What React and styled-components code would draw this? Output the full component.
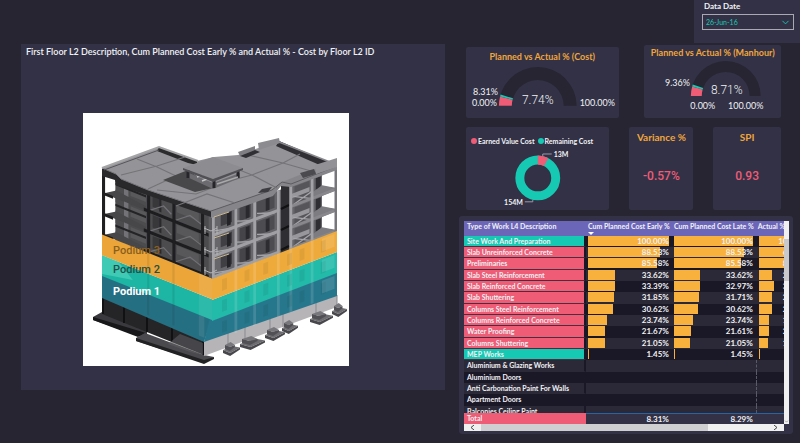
import { useState } from "react";
import styled, { createGlobalStyle } from "styled-components";
import { ChevronDown } from "lucide-react";

const colors = {
  page: "#272532",
  panel: "#323146",
  pink: "#ee5c76",
  teal: "#16c9b3",
  amber: "#f8b13c",
  title: "#f0a63c",
  purple: "#6c66b9",
  text: "#f1f1f4",
};

const rows = [
  { name: "Site Work And Preparation", tone: "teal", early: 100, late: 100, actual: 100 },
  { name: "Slab Unreinforced Concrete", tone: "pink", early: 88.53, late: 88.53, actual: 68.53 },
  { name: "Preliminaries", tone: "pink", early: 85.58, late: 85.58, actual: 85.58 },
  { name: "Slab Steel Reinforcement", tone: "pink", early: 33.62, late: 33.62, actual: 25.62 },
  { name: "Slab Reinforced Concrete", tone: "pink", early: 33.39, late: 32.97, actual: 30.39 },
  { name: "Slab Shuttering", tone: "pink", early: 31.85, late: 31.71, actual: 25.85 },
  { name: "Columns Steel Reinforcement", tone: "pink", early: 30.62, late: 30.62, actual: 26.62 },
  { name: "Columns Reinforced Concrete", tone: "pink", early: 23.74, late: 23.74, actual: 19.74 },
  { name: "Water Proofing", tone: "pink", early: 21.67, late: 21.61, actual: 20.67 },
  { name: "Columns Shuttering", tone: "pink", early: 21.05, late: 21.05, actual: 18.05 },
  { name: "MEP Works", tone: "teal", early: 1.45, late: 1.45, actual: 1.45 },
  { name: "Aluminium & Glazing Works" },
  { name: "Aluminium Doors" },
  { name: "Anti Carbonation Paint For Walls" },
  { name: "Apartment Doors" },
  { name: "Balconies Ceiling Paint" },
];

// point on a circle, share 0 = left end of the half ring, 1 = right end
const onHalf = (cx, cy, r, share) => {
  const a = Math.PI * (1 - share);
  return `${cx + r * Math.cos(a)} ${cy - r * Math.sin(a)}`;
};

const halfRing = (cx, cy, outer, inner, from, to) =>
  `M${onHalf(cx, cy, outer, from)} A${outer} ${outer} 0 0 1 ${onHalf(cx, cy, outer, to)} L${onHalf(cx, cy, inner, to)} A${inner} ${inner} 0 0 0 ${onHalf(cx, cy, inner, from)}Z`;

const CostGauge = () => (
  <Chart viewBox="0 0 153 54" role="img" aria-label="Planned vs Actual % (Cost)">
    <path d={halfRing(72, 42, 39, 26, 0, 1)} fill={colors.page} />
    <path d={halfRing(72, 42, 39, 26, 0, 0.077)} fill={colors.pink} />
    <path d={halfRing(72, 42, 39, 26, 0.077, 0.094)} fill={colors.teal} />
    <ChartText x="32" y="31" textAnchor="end">8.31%</ChartText>
    <ChartText x="31" y="42" textAnchor="end">0.00%</ChartText>
    <ChartText x="114" y="42">100.00%</ChartText>
    <Callout x="72" y="40" textAnchor="middle">7.74%</Callout>
  </Chart>
);

const ManhourGauge = () => (
  <Chart viewBox="0 0 137 58" role="img" aria-label="Planned vs Actual % (Manhour)">
    <path d={halfRing(82, 36, 35, 24, 0, 1)} fill={colors.page} />
    <path d={halfRing(82, 36, 35, 24, 0, 0.087)} fill={colors.pink} />
    <path d={halfRing(82, 36, 35, 24, 0.087, 0.106)} fill={colors.teal} />
    <ChartText x="46" y="26" textAnchor="end">9.36%</ChartText>
    <ChartText x="59" y="49" textAnchor="middle">0.00%</ChartText>
    <ChartText x="102" y="49" textAnchor="middle">100.00%</ChartText>
    <Callout x="83" y="34" textAnchor="middle">8.71%</Callout>
  </Chart>
);

const Donut = () => (
  <Chart viewBox="0 0 143 60" role="img" aria-label="Earned 13M, remaining 154M">
    <circle cx="72" cy="28" r="18" fill="none" stroke={colors.teal} strokeWidth="9" />
    <circle
      cx="72"
      cy="28"
      r="18"
      fill="none"
      stroke={colors.pink}
      strokeWidth="9"
      pathLength="167"
      strokeDasharray="13 154"
      transform="rotate(-90 72 28)"
    />
    <path d="M77 6 V4 H86 M67 50 V52 H59" fill="none" stroke="#9a99a8" strokeWidth="1" />
    <SmallText x="88" y="7">13M</SmallText>
    <SmallText x="57" y="55" textAnchor="end">154M</SmallText>
  </Chart>
);

// left facade runs 102..212, right facade 212..337, one storey is about 21 high
const leftAt = (t, floor) => [102 + 110 * t, 172 + 44 * t + 20.8 * floor];
const rightAt = (t, floor) => [212 + 125 * t, 216 - 48 * t + 21 * floor];

const band = (at, t1, t2, top, bottom) =>
  [at(t1, top), at(t2, top), at(t2, bottom), at(t1, bottom)].map((p) => p.join(",")).join(" ");

const leftColumns = [0, 0.41, 0.64, 0.9];
const rightColumns = [0, 0.18, 0.33, 0.52, 0.62, 0.79];
const footings = [
  [223, 350, 17],
  [240, 344, 25],
  [265, 335, 20],
  [282, 328, 16],
  [310, 319, 23],
  [332, 311, 15],
];

const Building = () => (
  <Model viewBox="83 113 266 253" role="img" aria-label="Building model by floor">
    <rect x="83" y="113" width="266" height="253" fill="#fff" />

    {/* back walls seen through the frames */}
    <polygon points={band(leftAt, 0.12, 1, 0, 3.1)} fill="#4c4c4f" />
    <polygon points={band(rightAt, 0, 0.88, 0, 3.1)} fill="#66666b" />
    {[0, 1, 2].map((f) => (
      <g key={f}>
        <polygon points={band(leftAt, 0.2, 0.24, f, f + 1)} fill="#737377" />
        <polygon points={band(leftAt, 0.26, 0.4, f + 0.1, f + 0.6)} fill="#59595c" />
        <polygon points={band(leftAt, 0.46, 0.52, f + 0.1, f + 0.7)} fill="#38383b" />
        <polygon points={band(leftAt, 0.52, 0.54, f + 0.1, f + 0.8)} fill="#29292c" />
        <polygon points={band(leftAt, 0.68, 0.88, f + 0.1, f + 0.5)} fill="#58585b" />
        <path
          d={`M${leftAt(0.44, f + 0.9)} L${leftAt(0.56, f + 0.45)} L${leftAt(0.63, f + 0.7)} M${leftAt(0.67, f + 0.9)} L${leftAt(0.8, f + 0.4)} L${leftAt(0.9, f + 0.6)}`}
          stroke="#717175"
          strokeWidth="1.2"
          fill="none"
        />
        {/* balcony wedge on the far left */}
        <polygon points={`${leftAt(0.02, f + 0.98)} ${leftAt(0.13, f + 0.62)} ${leftAt(0.4, f + 0.8)} ${leftAt(0.4, f + 1)} ${leftAt(0.02, f + 1)}`} fill="#47474a" />
        <polygon points={band(leftAt, 0.11, 0.4, f + 0.27, f + 0.38)} fill="#242427" />
        <polygon
          points={`${leftAt(0.03, f + 0.2)} ${leftAt(0.12, f + 0.2)} ${leftAt(0.12, f + 0.6)} ${leftAt(0.03, f + 0.92)}`}
          fill="#fff"
        />

        <polygon points={band(rightAt, 0.07, 0.16, f + 0.1, f + 0.65)} fill="#3f3f44" />
        <polygon points={band(rightAt, 0.12, 0.15, f + 0.15, f + 0.75)} fill="#242428" />
        <polygon points={band(rightAt, 0.22, 0.31, f + 0.1, f + 0.75)} fill="#454549" />
        <polygon points={band(rightAt, 0.27, 0.3, f + 0.15, f + 0.75)} fill="#2a2a2e" />
        <polygon points={band(rightAt, 0.36, 0.5, f + 0.1, f + 0.75)} fill="#4d4d51" />
        <polygon points={band(rightAt, 0.43, 0.46, f + 0.15, f + 0.75)} fill="#2d2d31" />
        <polygon points={band(rightAt, 0.66, 0.78, f + 0.1, f + 0.95)} fill="#55555a" />
        <polygon points={band(rightAt, 0.64, 0.78, f + 0.4, f + 0.62)} fill="#98989c" />
        <polygon points={band(rightAt, 0.83, 0.87, f + 0.1, f + 0.65)} fill="#2e2e33" />
        <path
          d={`M${rightAt(0.02, f + 0.75)} L${rightAt(0.17, f + 0.95)} M${rightAt(0.2, f + 0.7)} L${rightAt(0.32, f + 0.95)} M${rightAt(0.36, f + 0.7)} L${rightAt(0.5, f + 1)} M${rightAt(0.65, f + 0.55)} L${rightAt(0.8, f + 1)} M${rightAt(0.65, f + 0.95)} L${rightAt(0.8, f + 0.65)}`}
          stroke="#a6a6aa"
          strokeWidth="1.3"
          fill="none"
        />
        <polygon
          points={`${rightAt(0.81, f + 0.7)} ${rightAt(0.88, f + 0.55)} ${rightAt(1, f + 0.95)} ${rightAt(1, f + 1.05)} ${rightAt(0.81, f + 1.05)}`}
          fill="#7c7c81"
        />
        <polygon
          points={`${rightAt(0.93, f + 0.15)} ${rightAt(0.98, f + 0.15)} ${rightAt(0.98, f + 0.86)} ${rightAt(0.93, f + 0.7)}`}
          fill="#fff"
        />
      </g>
    ))}

    {/* slabs and columns */}
    {[1, 2, 3].map((f) => (
      <g key={f}>
        <polygon points={band(leftAt, 0, 0.1, f - 0.06, f + 0.08)} fill="#1d1d20" />
        <polygon points={band(leftAt, 0.38, 1, f - 0.1, f + 0.06)} fill="#1d1d20" />
        <polygon points={band(rightAt, 0, 0.54, f - 0.14, f + 0.02)} fill="#a0a0a4" />
        <polygon points={band(rightAt, 0.62, 1, f - 0.08, f + 0.06)} fill="#88888c" />
      </g>
    ))}
    {leftColumns.map((t) => (
      <polygon key={t} points={band(leftAt, t, t + 0.028, 0, 3)} fill="#1f1f22" />
    ))}
    <polygon points={band(leftAt, 0.97, 1, 0, 3)} fill="#5d5d61" />
    <polygon points="281,184 289,182 289,253 281,257" fill="#2f2f33" />
    <path
      d="M281 209 l8 -4 M281 230 l8 -4 M281 250 l8 -4"
      stroke="#111114"
      strokeWidth="2"
      fill="none"
    />
    {rightColumns.map((t) => (
      <polygon key={t} points={band(rightAt, t, t + 0.022, 0, 3)} fill="#a3a3a7" />
    ))}
    <polygon points={band(rightAt, 0.98, 1, -0.3, 3)} fill="#77777b" />

    {/* roof */}
    <polygon
      points="102,168 159,147 197,161 214,157 238,155 279,141 329,163 337,161 337,167 291,184 282,183 272,191 212,212 147,190 116,178 102,173"
      fill="#949498"
    />
    <polygon points="102,168 116,174 121,179 148,190 211,211 211,217 147,195 116,185 115,180 102,176" fill="#29292c" />
    <polygon points="211,211 272,190 282,182 337,160 337,170 291,187 281,186 273,196 211,218" fill="#86868a" />
    <path d="M211 211 L272 190 L282 182 L291 184 L337 166" stroke="#5c5c60" strokeWidth="1" fill="none" />
    <path d="M102 168 L116 174 L121 179 L148 190 L211 211" stroke="#77777b" strokeWidth="1" fill="none" />
    <polygon points="159,147 197,161 197,165 188,163 157,151" fill="#2b2b2e" />
    <polygon points="279,141 329,162 322,166 276,146" fill="#303034" />
    <path d="M102 168 L159 147 L198 161" stroke="#a5a5a8" strokeWidth="2" fill="none" />
    <path d="M104 170 L159 150" stroke="#57575b" strokeWidth="1" fill="none" />
    <path d="M279 142 L330 162" stroke="#89898d" strokeWidth="1.5" fill="none" />
    <path
      d="M121 175 L157 166 L185 157 M137 159 L157 167 L176 176 M148 189 L176 176 M157 190 L196 194 L222 184 M176 206 L207 194 L235 203 M243 154 L283 163 L318 173 M252 175 L283 163 L300 154 M232 167 L252 175 L277 188 M213 185 L252 175"
      stroke="#747478"
      strokeWidth="1.2"
      fill="none"
    />
    <polygon points="238,152 255,146 255,150 240,156" fill="#7f7f83" />
    <polygon points="258,143 279,138 280,143 259,150" fill="#8c8c90" />
    <polygon points="240,156 255,150 260,152 246,158" fill="#303034" />
    <polygon points="315,165 337,158 337,167 316,174" fill="#929296" />
    <polygon points="300,173 314,169 316,174 303,178" fill="#4b4b4f" />
    <polygon points="262,189 272,187 268,192 258,193" fill="#3d3d41" />

    {/* roof pavilion */}
    <polygon points="163,180 188,170 213,188 195,192" fill="#48484b" />
    <polygon points="187,172 213,183 240,173 240,178 213,189 187,177" fill="#6c6c70" />
    <path d="M197 177 l6 -2 M202 181 l5 -2" stroke="#c7c7ca" strokeWidth="1.5" />
    <path d="M188 170 v8 M214 179 v9 M238 171 v7" stroke="#26262a" strokeWidth="3" />
    <path d="M217 184 l21 -7" stroke="#a9a9ac" strokeWidth="1.5" />
    <polygon points="183,168 213,157 243,168 213,179" fill="#8d8d91" />
    <path d="M183 168 L213 179 L243 168 V170 L213 182 L183 170Z" fill="#515155" />

    {/* rails near the corner */}
    <path
      d="M204 228 l7 3 l6 -3 M204 249 l7 3 l6 -3 M204 270 l7 3 l6 -3 M205 226 v8 M205 247 v8 M205 267 v8 M217 226 v8 M217 247 v8"
      stroke="#b4b4b7"
      strokeWidth="1"
      fill="none"
    />
    <path d="M214 217 l15 -5 M214 238 l15 -5 M214 259 l15 -5" stroke="#c9b88f" strokeWidth="1" />

    {/* basement and foundation */}
    <polygon points="93,317 102,312 147,330 147,338 136,335 93,320" fill="#3a3a3e" />
    <polygon points="93,317 93,320 138,337 146,333" fill="#18181b" />
    <polygon points="136,338 145,333 204,355 214,357 204,363 136,341" fill="#4a4a4e" />
    <polygon points="136,338 136,341 204,364 214,359 214,357 204,360" fill="#222225" />
    <polygon points="102,296 204,340 204,355 102,314" fill="#252528" />
    <path d="M103 297 v17 M124 305 v18 M147 315 v17 M172 326 v16 M203 340 v15" stroke="#111114" strokeWidth="2" />
    <polygon points="168,344 180,334 203,343 203,355 190,352" fill="#5d5d61" opacity="0.6" />
    <polygon points="204,341 337,295 337,307 204,356" fill="#b7b4b8" />
    <path d="M228 333 v14 M245 327 v14 M270 318 v14 M283 314 v13 M316 302 v13 M337 295 v12" stroke="#89898d" strokeWidth="1" />
    {footings.map(([x, y, w]) => (
      <g key={x}>
        <polygon
          points={`${x},${y} ${x + w * 0.6},${y - w * 0.22} ${x + w},${y - w * 0.14} ${x + w * 0.42},${y + 3}`}
          fill="#6d6c70"
        />
        <polygon
          points={`${x},${y} ${x + w * 0.42},${y + 3} ${x + w},${y - w * 0.14} ${x + w},${y - w * 0.14 + 2} ${x + w * 0.42},${y + 6} ${x},${y + 3}`}
          fill="#48474b"
        />
        <polygon points={`${x + 2},${y - 5} ${x + w * 0.45},${y - 8} ${x + w * 0.7},${y - 5} ${x + w * 0.4},${y - 3}`} fill="#78777b" />
        <polygon
          points={`${x + 2},${y - 5} ${x + w * 0.4},${y - 3} ${x + w * 0.7},${y - 5} ${x + w * 0.7},${y - 3} ${x + w * 0.4},${y + 1} ${x + 2},${y - 1}`}
          fill="#515054"
        />
      </g>
    ))}

    {/* podium levels, the lowest one is set back at the corner */}
    <polygon points="102,274 212,318 204,342 102,298" fill="#256f82" />
    <polygon points="210,318 337,271 337,296 204,342" fill="#27778c" />
    <polygon points={band(leftAt, 0, 1, 4, 5)} fill="#1db5a3" />
    <polygon points={band(rightAt, 0, 1, 4, 5)} fill="#22baa8" />
    <polygon points={band(leftAt, 0, 1, 3, 4)} fill="#eba538" />
    <polygon points={band(rightAt, 0, 1, 3, 4)} fill="#efaa3c" />
    {[3, 4, 5].map((f) => (
      <g key={f}>
        {rightColumns.slice(1).map((t) => (
          <polygon key={t} points={band(rightAt, t, t + 0.022, f, f + 1)} fill="#fff" opacity="0.13" />
        ))}
        {rightColumns.map((t) => (
          <polygon key={t} points={band(rightAt, t + 0.08, t + 0.12, f + 0.2, f + 0.75)} fill="#000" opacity="0.06" />
        ))}
        {[0.41, 0.64].map((t) => (
          <polygon key={t} points={band(leftAt, t, t + 0.02, f, f + 1)} fill="#000" opacity="0.08" />
        ))}
        <polygon points={band(leftAt, 0.88, f === 5 ? 0.93 : 1, f, f + 1)} fill="#fff" opacity="0.08" />
        <polygon points={band(rightAt, 0.88, 0.98, f + 0.1, f + 0.7)} fill="#fff" opacity="0.12" />
      </g>
    ))}
    <polygon points={`${leftAt(0, 4)} ${leftAt(0.15, 4)} ${leftAt(0.28, 4.6)} ${leftAt(0, 4.9)}`} fill="#5fe0c6" opacity="0.5" />

    <LevelText x="113" y="254" fill="#8a5f20">Podium 3</LevelText>
    <LevelText x="113" y="273" fill="#254f47">Podium 2</LevelText>
    <LevelText x="113" y="295" fill="#fff" $strong>Podium 1</LevelText>
  </Model>
);

const BarCell = ({ value }) => (
  <NumberCell $empty={value === undefined}>
    {value !== undefined && (
      <Track>
        <Bar style={{ width: `${value}%` }} />
        <Value>{value.toFixed(2)}%</Value>
      </Track>
    )}
  </NumberCell>
);

const WorkTable = () => (
  <TablePanel>
    <Scroller>
      <Viewport>
        <Table>
          <colgroup>
            <Col $w={122} />
            <Col $w={86} />
            <Col $w={84} />
            <Col $w={57} />
          </colgroup>
          <thead>
            <tr>
              <HeadCell scope="col">Type of Work L4 Description</HeadCell>
              <HeadCell scope="col" aria-sort="descending">
                Cum Planned Cost Early %
                <SortMark />
              </HeadCell>
              <HeadCell scope="col">Cum Planned Cost Late %</HeadCell>
              <HeadCell scope="col">Actual %</HeadCell>
            </tr>
          </thead>
          <tbody>
            {rows.map((row) => (
              <Row key={row.name}>
                <NameCell scope="row" $tone={row.tone}>{row.name}</NameCell>
                <BarCell value={row.early} />
                <BarCell value={row.late} />
                <BarCell value={row.actual} />
              </Row>
            ))}
          </tbody>
          <tfoot>
            <tr>
              <TotalName scope="row">Total</TotalName>
              <TotalCell>8.31%</TotalCell>
              <TotalCell>8.29%</TotalCell>
              <TotalCell />
            </tr>
          </tfoot>
        </Table>
      </Viewport>
      <VerticalBar>
        <VerticalThumb />
        <ChevronDown size={5} />
      </VerticalBar>
    </Scroller>
    <HorizontalBar>
      <Arrow aria-label="Scroll left">
        <svg width="5" height="5" viewBox="0 0 5 5">
          <path d="M4 0 L1 2.5 L4 5" fill="none" stroke="#444" />
        </svg>
      </Arrow>
      <HorizontalThumb />
      <Arrow aria-label="Scroll right">
        <svg width="5" height="5" viewBox="0 0 5 5">
          <path d="M1 0 L4 2.5 L1 5" fill="none" stroke="#444" />
        </svg>
      </Arrow>
    </HorizontalBar>
  </TablePanel>
);

const App = () => {
  const [date, setDate] = useState("26-Jun-16");

  return (
    <>
      <GlobalStyle />
      <Header>
        <DatePanel>
          <DateLabel htmlFor="data-date">Data Date</DateLabel>
          <SelectBox>
            <Select
              id="data-date"
              value={date}
              onChange={(ev) => {
                setDate(ev.target.value);
              }}
            >
              <option>26-Jun-16</option>
            </Select>
            <ChevronDown size={11} strokeWidth={2} />
          </SelectBox>
        </DatePanel>
      </Header>
      <Main>
        <ModelPanel>
          <ModelTitle>
            First Floor L2 Description, Cum Planned Cost Early % and Actual % - Cost by Floor L2 ID
          </ModelTitle>
          <Building />
        </ModelPanel>
        <Side>
          <Cards>
            <Card $grow={153}>
              <CardTitle $pad={3}>Planned vs Actual % (Cost)</CardTitle>
              <CostGauge />
            </Card>
            <Spacer $grow={26} />
            <Card $grow={137}>
              <CardTitle>Planned vs Actual % (Manhour)</CardTitle>
              <ManhourGauge />
            </Card>
          </Cards>
          <Cards>
            <Card $grow={143}>
              <Legend>
                <LegendItem $color={colors.pink}>Earned Value Cost</LegendItem>
                <LegendItem $color={colors.teal}>Remaining Cost</LegendItem>
              </Legend>
              <Donut />
            </Card>
            <Spacer $grow={21} />
            <Card $grow={64}>
              <CardTitle $pad={3} $large>Variance %</CardTitle>
              <Figure>-0.57%</Figure>
            </Card>
            <Spacer $grow={20} />
            <Card $grow={68}>
              <CardTitle $pad={3} $large>SPI</CardTitle>
              <Figure>0.93</Figure>
            </Card>
          </Cards>
          <WorkTable />
        </Side>
      </Main>
    </>
  );
};

const GlobalStyle = createGlobalStyle`
  * {
    box-sizing: border-box;
  }
  body {
    margin: 0;
    background: ${colors.page};
    color: ${colors.text};
    font-family: Lato, "Open Sans", sans-serif;
    font-size: 10px;
  }
`;

const Header = styled.header`
  display: flex;
  justify-content: flex-end;
`;

const DatePanel = styled.div`
  width: 106px;
  height: 43px;
  padding: 0 6px 0 8px;
  background: ${colors.panel};
`;

const DateLabel = styled.label`
  display: block;
  padding: 0 2px;
  font-size: 8px;
  font-weight: bold;
  line-height: 12px;
  margin-bottom: 2px;
`;

const SelectBox = styled.div`
  display: flex;
  align-items: center;
  height: 16px;
  padding-right: 2px;
  border: 1px solid #a9a8b3;
  color: ${colors.teal};
`;

const Select = styled.select`
  flex: 1;
  min-width: 0;
  appearance: none;
  padding: 0 3px;
  border: 0;
  background: transparent;
  color: inherit;
  font-family: inherit;
  font-size: 7px;
`;

const Main = styled.main`
  display: grid;
  grid-template-columns: 424fr 334fr;
  align-items: start;
  gap: 14px;
  padding: 1px 7px 10px 21px;
`;

const ModelPanel = styled.section`
  padding: 0 96px 24px 62px;
  background: ${colors.panel};
`;

const ModelTitle = styled.h1`
  margin: 0 -90px 53px -57px;
  font-size: 9px;
  font-weight: 600;
  line-height: 16px;
  white-space: nowrap;
`;

const Model = styled.svg`
  display: block;
  width: 100%;
`;

const LevelText = styled.text`
  font-family: Roboto, sans-serif;
  font-size: 11px;
  font-weight: ${(p) => (p.$strong ? 700 : 500)};
`;

const Side = styled.div`
  min-width: 0;
  padding-top: 1px;
`;

const Cards = styled.div`
  display: flex;
  align-items: flex-end;
  padding: 0 12px 0 7px;
  margin-bottom: 9px;

  & + & {
    align-items: stretch;
    margin-bottom: 6px;
  }
`;

const Card = styled.section`
  flex: ${(p) => p.$grow} 1 0;
  min-width: 0;
  border-radius: 2px;
  background: ${colors.panel};
`;

const Spacer = styled.div`
  flex: ${(p) => p.$grow} 1 0;
`;

const CardTitle = styled.h2`
  margin: 0;
  padding-top: ${(p) => p.$pad || 1}px;
  color: ${colors.title};
  font-size: ${(p) => (p.$large ? 10 : 9)}px;
  font-weight: bold;
  line-height: 14px;
  text-align: center;
  white-space: nowrap;
`;

const Chart = styled.svg`
  display: block;
  width: 100%;
`;

const ChartText = styled.text`
  fill: ${colors.text};
  font-size: 9px;
`;

const SmallText = styled.text`
  fill: ${colors.text};
  font-size: 7px;
  font-weight: bold;
`;

const Callout = styled.text`
  fill: ${colors.text};
  font-family: Roboto, sans-serif;
  font-size: 12px;
  font-weight: 300;
`;

const Legend = styled.div`
  display: flex;
  gap: 3px;
  padding: 10px 5px 4px;
`;

const LegendItem = styled.span`
  display: flex;
  align-items: center;
  gap: 1px;
  font-size: 7px;
  font-weight: bold;
  line-height: 9px;
  white-space: nowrap;

  &::before {
    content: "";
    width: 6px;
    height: 6px;
    border-radius: 50%;
    background: ${(p) => p.$color};
  }
`;

const Figure = styled.p`
  margin: 0;
  padding-top: 24px;
  color: ${colors.pink};
  font-family: Roboto, sans-serif;
  font-size: 12px;
  font-weight: 500;
  line-height: 16px;
  text-align: center;
`;

const TablePanel = styled.section`
  padding: 5px 4px 3px 5px;
  border-radius: 3px;
  background: ${colors.panel};
`;

const Scroller = styled.div`
  display: flex;
`;

const Viewport = styled.div`
  flex: 1;
  min-width: 0;
  height: 203px;
  overflow: auto;
  scrollbar-width: none;
`;

const Table = styled.table`
  width: 109%;
  table-layout: fixed;
  border-collapse: separate;
  border-spacing: 0;
  font-size: 8px;
  font-weight: bold;
  line-height: 11px;
  white-space: nowrap;

  tfoot {
    position: sticky;
    bottom: 0;
  }
`;

const Col = styled.col`
  width: calc(100% * ${(p) => p.$w} / 349);
`;

const HeadCell = styled.th`
  height: 15px;
  padding: 0 2px;
  background: ${colors.purple};
  font-size: 7px;
  line-height: 11px;
  text-align: left;
  vertical-align: top;

  &:first-child {
    padding-left: 3px;
  }
`;

const SortMark = styled.span`
  display: block;
  width: 0;
  border: 3px solid transparent;
  border-top-color: #fff;
  border-bottom: 0;
`;

const Row = styled.tr`
  background: #2b2937;

  &:nth-child(odd) {
    background: #1a1827;
  }
  /* every third line takes the spare pixel */
  &:nth-child(3n) td {
    height: 12px;
  }
`;

const NameCell = styled.th`
  padding: 0 3px;
  border-right: 2px solid #1a1827;
  border-bottom: 1px solid ${(p) => (p.$tone ? "#4b2c40" : "transparent")};
  background: ${(p) => (p.$tone ? colors[p.$tone] : "transparent")};
  font-size: 7px;
  line-height: 10px;
  text-align: left;
`;

const NumberCell = styled.td`
  height: 11px;
  padding: 0 3px 1px 2px;

  &:last-child {
    border-left: 1px ${(p) => (p.$empty ? "dashed #5b5a68" : "solid transparent")};
  }
`;

const Track = styled.div`
  display: grid;
  height: 10px;
  line-height: 10px;
`;

const Bar = styled.span`
  grid-area: 1 / 1;
  background: ${colors.amber};
`;

const Value = styled.span`
  grid-area: 1 / 1;
  text-align: right;
`;

const TotalName = styled.th`
  padding: 0 3px;
  background: ${colors.pink};
  font-size: 7px;
  text-align: left;
`;

const TotalCell = styled.td`
  padding: 0 3px 0 2px;
  border-top: 1px solid #2763a5;
  background: ${colors.panel};
  line-height: 10px;
  text-align: right;
`;

const VerticalBar = styled.div`
  display: flex;
  flex-direction: column;
  justify-content: space-between;
  width: 5px;
  background: #f0f0f0;
  color: #444;
`;

const VerticalThumb = styled.div`
  height: 42px;
  margin-top: 18px;
  background: #c9c9cb;
`;

const HorizontalBar = styled.div`
  display: flex;
  height: 7px;
  margin-right: 5px;
  background: #f0f0f0;
`;

const HorizontalThumb = styled.div`
  width: 71%;
  margin-right: auto;
  background: #cfcfd1;
`;

const Arrow = styled.button`
  display: flex;
  align-items: center;
  justify-content: center;
  width: 17px;
  padding: 0;
  border: 0;
  background: transparent;
`;

export default App;
